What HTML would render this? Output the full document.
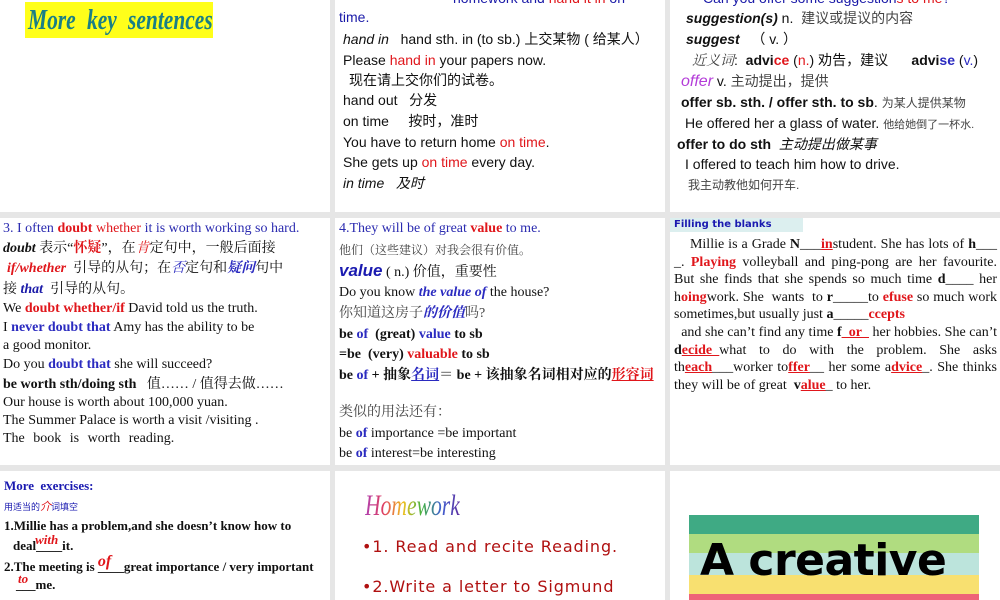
<!DOCTYPE html>
<html><head><meta charset="utf-8"><style>
*{margin:0;padding:0;box-sizing:border-box}
body{width:1000px;height:600px;overflow:hidden;background:#e6e6e6;position:relative;font-family:"Liberation Sans","Noto Sans CJK SC",sans-serif}
.p{position:absolute;background:#fff;overflow:hidden}
.l{position:absolute;white-space:nowrap;line-height:18px}
.s{font-family:"Liberation Serif","Noto Serif CJK SC",serif}
.r{color:#e0161b}.b{color:#1a1aa8}.bl{color:#2b2bc0}
.k{color:#000}
</style></head><body>

<!-- panel 1 -->
<div class="p" style="left:0;top:0;width:330px;height:212px">
 <div style="position:absolute;left:25px;top:2px;width:188px;height:36px;background:#ffff1a"></div>
 <div class="l s" style="left:28px;top:5px;font:italic bold 29px/30px 'Liberation Serif',serif;color:#1a7f86;word-spacing:8px;transform:scaleX(0.74);transform-origin:left">More key sentences</div>
</div>

<!-- panel 2 -->
<div class="p" style="left:335px;top:0;width:330px;height:212px;font-size:14px;color:#111">
 <div class="l" style="left:118px;top:-11px;color:#1a1aa8">homework and <span class="r">hand it in</span> on</div>
 <div class="l" style="left:4px;top:8px;color:#1a1aa8">time.</div>
 <div class="l" style="left:8px;top:30px"><i>hand in</i> &nbsp; hand sth. in (to sb.) 上交某物 ( 给某人）</div>
 <div class="l" style="left:8px;top:51px">Please <span class="r">hand in</span> your papers now.</div>
 <div class="l" style="left:14px;top:71px">现在请上交你们的试卷。</div>
 <div class="l" style="left:8px;top:91px">hand out &nbsp; 分发</div>
 <div class="l" style="left:8px;top:112px">on time &nbsp; &nbsp; 按时，准时</div>
 <div class="l" style="left:8px;top:133px">You have to return home <span class="r">on time</span>.</div>
 <div class="l" style="left:8px;top:153px">She gets up <span class="r">on time</span> every day.</div>
 <div class="l" style="left:8px;top:174px"><i>in time &nbsp; 及时</i></div>
</div>

<!-- panel 3 -->
<div class="p" style="left:670px;top:0;width:330px;height:212px;font-size:14px;color:#111">
 <div class="l" style="left:33px;top:-11px;color:#1a1aa8">Can you offer some suggestion<span class="r">s to me</span>?</div>
 <div class="l" style="left:16px;top:9px"><b><i>suggestion(s)</i></b> n. &nbsp;<span style="color:#444">建议或提议的内容</span></div>
 <div class="l" style="left:16px;top:30px"><b><i>suggest</i></b> &nbsp; （ v. ）</div>
 <div class="l" style="left:22px;top:51px"><i class="s" style="color:#444">近义词</i>: &nbsp;<b>advi<span class="r">ce</span></b> (<span class="r">n.</span>) 劝告，建议 &nbsp; &nbsp; &nbsp;<b>advi<span class="bl">se</span></b> (<span class="bl">v.</span>)</div>
 <div class="l" style="left:11px;top:72px"><i style="color:#b33cd8;font-size:16px">offer</i> v. <span style="color:#444">主动提出，提供</span></div>
 <div class="l" style="left:11px;top:93px"><b>offer sb. sth. / offer sth. to sb</b>. <span style="font-size:12px;color:#444">为某人提供某物</span></div>
 <div class="l" style="left:15px;top:114px">He offered her a glass of water. <span style="font-size:11px;color:#444">他给她倒了一杯水.</span></div>
 <div class="l" style="left:7px;top:135px"><b>offer to do sth</b> &nbsp;<i>主动提出做某事</i></div>
 <div class="l" style="left:15px;top:155px">I offered to teach him how to drive.</div>
 <div class="l" style="left:18px;top:176px;font-size:12px;color:#444">我主动教他如何开车.</div>
</div>

<!-- row 2 col 1 -->
<div class="p s" style="left:0;top:218px;width:330px;height:247px;font-size:14px;color:#111">
 <div class="l" style="left:3px;top:2px;color:#2b2bb0">3. I often <b class="r">doubt</b> <span class="r">whether</span> it is worth working so hard.</div>
 <div class="l" style="left:3px;top:22px"><b><i>doubt</i></b> 表示“<b class="r">怀疑</b>”，在<i class="r">肯</i>定句中，一般后面接</div>
 <div class="l" style="left:7px;top:42px"><b><i class="r">if/whether</i></b> &nbsp;引导的从句；在<i class="bl">否</i>定句和<b><i class="bl">疑问</i></b>句中</div>
 <div class="l" style="left:3px;top:63px">接 <b><i class="b">that</i></b> &nbsp;引导的从句。</div>
 <div class="l" style="left:3px;top:82px">We <b class="r">doubt whether/if</b> David told us the truth.</div>
 <div class="l" style="left:3px;top:101px">I <b class="bl">never doubt that</b> Amy has the ability to be</div>
 <div class="l" style="left:3px;top:119px">a good monitor.</div>
 <div class="l" style="left:3px;top:138px">Do you <b class="bl">doubt that</b> she will succeed?</div>
 <div class="l" style="left:3px;top:158px"><b>be worth sth/doing sth</b> &nbsp; 值…… / 值得去做……</div>
 <div class="l" style="left:3px;top:176px">Our house is worth about 100,000 yuan.</div>
 <div class="l" style="left:3px;top:194px">The Summer Palace is worth a visit /visiting .</div>
 <div class="l" style="left:3px;top:212px;word-spacing:5px">The book is worth reading.</div>
</div>

<!-- row 2 col 2 -->
<div class="p s" style="left:335px;top:218px;width:330px;height:247px;font-size:14px;color:#111">
 <div class="l" style="left:4px;top:2px;color:#2b2bb0">4.They will be of great <b class="r">value</b> to me.</div>
 <div class="l" style="left:4px;top:23px;font-size:12px;color:#444">他们（这些建议）对我会很有价值。</div>
 <div class="l" style="left:4px;top:44px"><b><i style="font-family:'Liberation Sans',sans-serif;font-size:17px;color:#1a1ab0">value</i></b> ( n.) 价值，重要性</div>
 <div class="l" style="left:4px;top:66px">Do you know <b><i class="bl">the value of</i></b> the house?</div>
 <div class="l" style="left:4px;top:87px;color:#444">你知道这房子<b><i class="bl">的价值</i></b>吗?</div>
 <div class="l" style="left:4px;top:108px"><b>be <span class="bl">of</span> &nbsp;(great) <span class="bl">value</span> to sb</b></div>
 <div class="l" style="left:4px;top:128px"><b>=be &nbsp;(very) <span class="r">valuable</span> to sb</b></div>
 <div class="l" style="left:4px;top:149px"><b>be <span class="bl">of</span> + 抽象<u class="bl">名词</u>＝ be + 该抽象名词相对应的<u class="r">形容词</u></b></div>
 <div class="l" style="left:4px;top:186px;color:#444">类似的用法还有：</div>
 <div class="l" style="left:4px;top:207px">be <b class="bl">of</b> importance =be important</div>
 <div class="l" style="left:4px;top:227px">be <b class="bl">of</b> interest=be interesting</div>
</div>

<!-- row 2 col 3 -->
<div class="p s" style="left:670px;top:218px;width:330px;height:247px;font-size:14px;color:#111">
 <div style="position:absolute;left:0;top:0;width:133px;height:14px;background:#dcefef"></div>
 <div class="l" style="left:4px;top:-2px;font:bold 10px/18px 'DejaVu Sans',sans-serif;color:#1a1ab0">Filling the blanks</div>
 <div style="position:absolute;left:4px;top:18px;width:323px;line-height:17.6px;text-align:justify">
 &nbsp; &nbsp; Millie is a Grade <b>N</b>___<b class="r"><u>in</u></b>student. She has lots of <b>h</b>___ _. <b class="r">Playing</b> volleyball and ping-pong are her favourite. But she finds that she spends so much time <b>d</b>____ her h<b class="r">oing</b>work. She &nbsp;wants &nbsp;to <b>r</b>_____to <b class="r">efuse</b> so much work sometimes,but usually just <b>a</b>_____<b class="r">ccepts</b><br>
 &nbsp; and she can’t find any time <b>f</b><b class="r"><u>_or_</u></b> her hobbies. She can’t <b>d</b><b class="r"><u>ecide_</u></b>what to do with the problem. She asks th<b class="r"><u>each</u></b>___worker to<b class="r"><u>ffer</u></b>__ her some a<b class="r"><u>dvice</u></b>_. She thinks they will be of great &nbsp;<b>v</b><b class="r"><u>alue</u></b>_ to her.
 </div>
</div>

<!-- row 3 col 1 -->
<div class="p s" style="left:0;top:471px;width:330px;height:129px;color:#111">
 <div class="l" style="left:4px;top:6px;font-size:13px;font-weight:bold;color:#1a1ab0;word-spacing:3px">More exercises:</div>
 <div class="l" style="left:4px;top:27px;font-size:9px;color:#1a1ab0;font-family:'Liberation Sans','Noto Sans CJK SC',sans-serif">用适当的<i class="r" style="font-size:11px">介</i>词填空</div>
 <div class="l" style="left:4px;top:46px;font-size:13px;font-weight:bold">1.Millie has a problem,and she doesn’t know how to</div>
 <div class="l" style="left:13px;top:66px;font-size:13px;font-weight:bold">deal<span style="position:relative">____<i class="r" style="position:absolute;left:-1px;top:-7px;font-size:13px">with</i></span>it.</div>
 <div class="l" style="left:4px;top:87px;font-size:13px;font-weight:bold">2.The meeting is <span style="position:relative">____<i class="r" style="position:absolute;left:0;top:-6px;font-size:16px">of</i></span>great importance / very important</div>
 <div class="l" style="left:16px;top:105px;font-size:13px;font-weight:bold"><span style="position:relative">___<i class="r" style="position:absolute;left:2px;top:-7px;font-size:13px">to</i></span>me.</div>
</div>

<!-- row 3 col 2 -->
<div class="p" style="left:335px;top:471px;width:330px;height:129px">
 <div class="l" style="left:30px;top:18px;font:italic 30px/34px 'Liberation Serif',serif;transform:scaleX(0.72);transform-origin:left;background:linear-gradient(90deg,#b040b0,#e04060,#f0c020,#40b040,#4060d0,#6030a0);-webkit-background-clip:text;background-clip:text;color:transparent">Homework</div>
 <div class="l" style="left:27px;top:67px;font:16px/18px 'DejaVu Sans',sans-serif;color:#b01010;letter-spacing:0.9px">•1. Read and recite Reading.</div>
 <div class="l" style="left:27px;top:107px;font:16px/18px 'DejaVu Sans',sans-serif;color:#b01010;letter-spacing:0.9px">•2.Write a letter to Sigmund</div>
</div>

<!-- row 3 col 3 -->
<div class="p" style="left:670px;top:471px;width:330px;height:129px">
 <div style="position:absolute;left:19px;top:44px;width:290px;height:20px;background:#3faa84"></div>
 <div style="position:absolute;left:19px;top:63px;width:290px;height:20px;background:#b0dc80"></div>
 <div style="position:absolute;left:19px;top:82px;width:290px;height:22px;background:#bce4dc"></div>
 <div style="position:absolute;left:19px;top:104px;width:290px;height:19px;background:#f8e070"></div>
 <div style="position:absolute;left:19px;top:123px;width:290px;height:10px;background:#ee6378"></div>
 <div class="l" style="left:30px;top:65px;font:bold 44px/50px 'DejaVu Sans',sans-serif;color:#000;letter-spacing:-0.5px">A creative</div>
</div>
</body></html>
